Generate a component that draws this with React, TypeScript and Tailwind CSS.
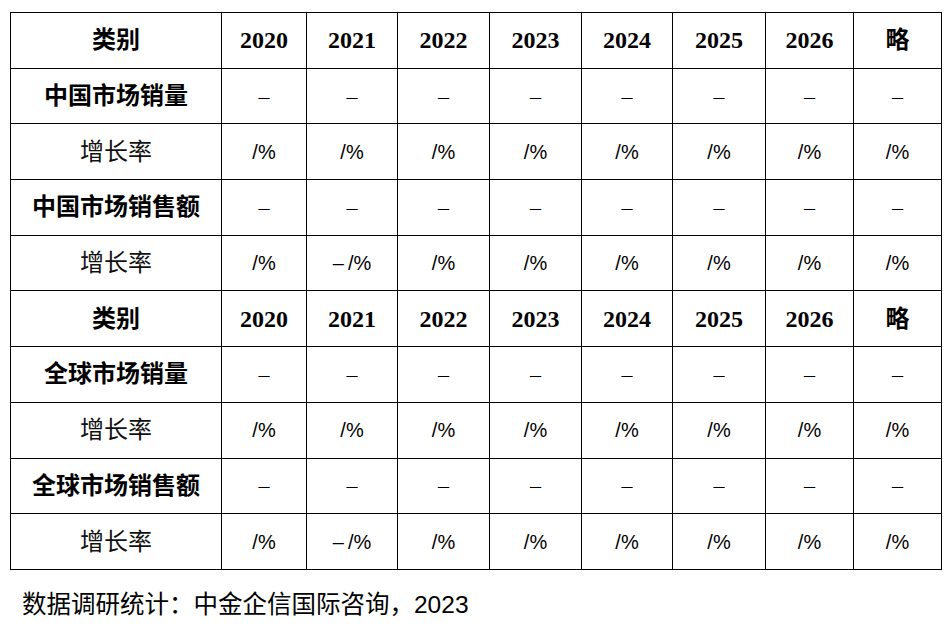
const serif = "font-['Liberation_Serif','Noto_Sans_CJK_SC',serif]";
const sans = "font-['Liberation_Sans','Noto_Sans_CJK_SC',sans-serif]";

const years = ["2020", "2021", "2022", "2023", "2024", "2025", "2026", "略"];
const widths = ["w-[211px]", "w-[85px]", "w-[91px]", "w-[92px]", "w-[92px]", "w-[91px]", "w-[93px]", "w-[88px]", "w-[88px]"];

type Row = { label: string; kind: "head" | "value" | "rate"; cells: string[] };

const dash = Array(8).fill("–");
const rate = Array(8).fill("/%");
const rate2 = ["/%", "–\u2009/%", "/%", "/%", "/%", "/%", "/%", "/%"];

const rows: Row[] = [
  { label: "类别", kind: "head", cells: years },
  { label: "中国市场销量", kind: "value", cells: dash },
  { label: "增长率", kind: "rate", cells: rate },
  { label: "中国市场销售额", kind: "value", cells: dash },
  { label: "增长率", kind: "rate", cells: rate2 },
  { label: "类别", kind: "head", cells: years },
  { label: "全球市场销量", kind: "value", cells: dash },
  { label: "增长率", kind: "rate", cells: rate },
  { label: "全球市场销售额", kind: "value", cells: dash },
  { label: "增长率", kind: "rate", cells: rate2 },
];

export default function App() {
  return (
    <div className="w-[949px] h-[626px] bg-white text-black">
      <div className="pl-[10px] pt-[12px]">
        <table className="border-collapse table-fixed w-[932px]">
          <colgroup>
            {widths.map((w, i) => (
              <col key={i} className={w} />
            ))}
          </colgroup>
          <tbody>
            {rows.map((r, i) => (
              <tr key={i} className="h-[55.7px]">
                <td
                  className={
                    "border border-black text-center p-0 " +
                    (r.kind === "rate"
                      ? `${sans} text-[24px] font-normal text-[#111]`
                      : `${serif} text-[24px] font-bold`)
                  }
                >
                  {r.label}
                </td>
                {r.cells.map((c, j) => (
                  <td
                    key={j}
                    className={
                      "border border-black text-center p-0 " +
                      (r.kind === "head"
                        ? `${serif} text-[24px] font-bold`
                        : r.kind === "value"
                        ? `${serif} text-[22px]`
                        : `${sans} text-[20px] font-light`)
                    }
                  >
                    {c}
                  </td>
                ))}
              </tr>
            ))}
          </tbody>
        </table>
      </div>
      <div className={`${sans} pl-[22px] pt-[19px] text-[24.5px] leading-[32px]`}>
        数据调研统计：中金企信国际咨询，2023
      </div>
    </div>
  );
}
